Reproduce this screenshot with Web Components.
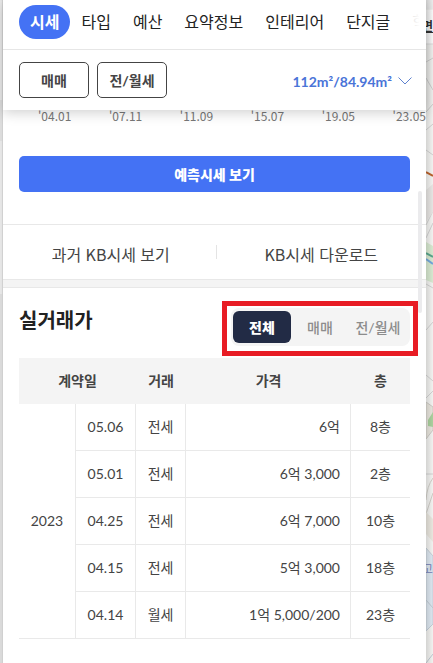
<!DOCTYPE html>
<html lang="ko">
<head>
<meta charset="utf-8">
<meta name="viewport" content="width=device-width, initial-scale=1">
<title>시세</title>
<style>
  body {
    margin: 0;
    font-family: Lato, "Noto Sans CJK KR", sans-serif;
    font-size: 14px;
    color: #444;
    background: #fff;
  }
</style>
</head>
<body>
<price-page>
  <panel-header slot="header"></panel-header>
  <price-axis labels="'04.01,'07.11,'11.09,'15.07,'19.05,'23.05"></price-axis>
  <forecast-button>예측시세 보기</forecast-button>
  <link-pair>
    <a href="#history">과거 KB시세 보기</a>
    <a href="#download">KB시세 다운로드</a>
  </link-pair>
  <deal-section heading="실거래가">
    <deal-tabs slot="tabs"></deal-tabs>
    <deal-table></deal-table>
  </deal-section>
</price-page>

<script>
function attach(host, html) {
  const template = document.createElement('template');
  template.innerHTML = html;
  host.attachShadow({ mode: 'open' });
  host.shadowRoot.appendChild(template.content.cloneNode(true));
}

class PricePage extends HTMLElement {
  constructor() {
    super();
    attach(this, `
      <style>
        :host {
          display: grid;
          grid-template-columns: 3px minmax(0, 1fr) 7px;
          min-height: 100vh;
          overflow: hidden;
        }
        .edge {
          background: linear-gradient(#e9e9e9 0, #e9e9e9 100px, #dcdcdc 100px, #dcdcdc 141px, #e6e6e6 141px, #e6e6e6 294px, #dadada 294px);
          box-shadow: inset -1px 0 1px #cfcfcf;
        }
        main {
          position: relative;
          background: #fff;
        }
        .thumb {
          position: absolute;
          top: 191px;
          right: 4px;
          width: 4px;
          height: 122px;
          border-radius: 2px;
          background: #ebebed;
        }
        .map {
          position: relative;
          overflow: hidden;
          background: #f1f1ef;
        }
        .map svg {
          display: block;
        }
        .map span {
          position: absolute;
          right: 0;
          white-space: nowrap;
        }
        .control {
          top: 17px;
          font-size: 12px;
          font-weight: bold;
          color: #333;
          text-decoration: underline;
        }
        .place {
          top: 560px;
          font-size: 11px;
          color: #7480b5;
        }
        .shade {
          position: absolute;
          inset: 0;
          background: linear-gradient(to right, rgba(0, 0, 0, .12), rgba(0, 0, 0, 0));
        }
      </style>
      <div class="edge"></div>
      <main>
        <slot name="header"></slot>
        <slot></slot>
        <div class="thumb"></div>
      </main>
      <div class="map">
        <svg width="7" height="663" viewBox="0 0 7 663" fill="none">
          <path d="M0 0h7v9H0z" fill="#ececec"/>
          <path d="M0 10h7v34H0z" fill="#fbfbfb"/>
          <path d="M0 44h7" stroke="#ddd"/>
          <path d="M0 62l7-4M0 78l7 12M0 112l7-8M0 130l7-6M0 150l7 5M0 212l7-16M0 225l7-14M0 238l7-15M0 284l7 4M0 330l7-8M0 375l7 6M0 398l7-7M0 474h7" stroke="#d0d0d0"/>
          <path d="M0 172l7 4" stroke="#b9622c" stroke-width="2"/>
          <path d="M0 190l7-6v28L0 222z" fill="#e6e4e2"/>
          <path d="M0 242l7 4v37l-7-3z" fill="#d6e7cf"/>
          <path d="M0 253l7 4" stroke="#5aa58c" stroke-width="2"/>
          <path d="M0 259l7 5" stroke="#72a7da" stroke-width="2"/>
          <path d="M0 402l7 5v23l-7 9z" fill="#e7e4dc" stroke="#cbc9c4"/>
          <path d="M2 420l5-8v15l-5-1z" fill="#a9cf9d"/>
          <path d="M7 478Q1 486 0 500M7 493L0 514l7 9" stroke="#cfcdc7"/>
          <path d="M0 512l7 7v23l-7-8z" fill="#e8e5dd"/>
          <path d="M0 548l7 8v68l-7 7z" fill="#dce6ef" stroke="#c3cdd6"/>
          <path d="M0 600l7 8M0 663l7-9" stroke="#bfc9d1"/>
        </svg>
        <span class="control">면</span>
        <span class="place">학고</span>
        <div class="shade"></div>
      </div>
    `);
  }
}

class PanelHeader extends HTMLElement {
  constructor() {
    super();
    attach(this, `
      <style>
        :host {
          display: block;
          position: relative;
          z-index: 1;
          background: #fff;
          box-shadow: 0 3px 12px rgba(0, 0, 0, .18);
        }
        nav {
          display: flex;
          align-items: center;
          box-sizing: border-box;
          height: 50px;
          padding: 0 0 6px 16px;
          overflow: hidden;
          border-bottom: 1px solid #e6e6e6;
          position: relative;
        }
        nav::after {
          content: "";
          position: absolute;
          inset: 0 0 0 auto;
          width: 32px;
          background: linear-gradient(to right, rgba(255, 255, 255, .6), #fff 80%);
        }
        nav a {
          flex: none;
          padding: 0 11px;
          border-radius: 17px;
          font-size: 16px;
          line-height: 34px;
          color: #222;
          text-decoration: none;
        }
        nav a.active {
          background: #4472f4;
          color: #fff;
          font-weight: bold;
        }
        .filters {
          display: flex;
          align-items: center;
          gap: 8px;
          padding: 12px 14px 12px 16px;
        }
        button {
          font: inherit;
          font-weight: bold;
          color: #444;
          background: #fff;
          cursor: pointer;
        }
        .type {
          width: 70px;
          height: 36px;
          padding: 0;
          border: 1px solid #444;
          border-radius: 5px;
        }
        .area {
          display: flex;
          align-items: center;
          gap: 6px;
          margin-left: auto;
          padding: 2px 0 0;
          border: 0;
          color: #4a74d8;
        }
      </style>
      <nav>
        <a href="#price" class="active">시세</a>
        <a href="#type">타입</a>
        <a href="#budget">예산</a>
        <a href="#summary">요약정보</a>
        <a href="#interior">인테리어</a>
        <a href="#posts">단지글</a>
        <a href="#school">학</a>
      </nav>
      <div class="filters">
        <button class="type">매매</button>
        <button class="type">전/월세</button>
        <button class="area">112m²/84.94m²
          <svg width="14" height="8" viewBox="0 0 14 8" fill="none" stroke="#5f82cf"><path d="M.5.5L7 7 13.500.5"/></svg>
        </button>
      </div>
    `);
  }
}

class PriceAxis extends HTMLElement {
  constructor() {
    super();
    attach(this, `
      <style>
        :host {
          display: flex;
          justify-content: space-between;
          height: 46px;
          padding-left: 35px;
          font-family: "Noto Sans CJK KR", sans-serif;
          font-size: 12px;
          line-height: 12px;
          color: #777;
        }
      </style>
    `);
  }

  connectedCallback() {
    this.getAttribute('labels').split(',').forEach((label) => {
      const span = document.createElement('span');
      span.textContent = label;
      this.shadowRoot.appendChild(span);
    });
  }
}

class ForecastButton extends HTMLElement {
  constructor() {
    super();
    attach(this, `
      <style>
        :host {
          display: block;
          padding: 0 16px 32px;
        }
        button {
          width: 100%;
          height: 36px;
          border: 0;
          border-radius: 5px;
          background: #4472f4;
          color: #fff;
          font: inherit;
          font-weight: 900;
          cursor: pointer;
        }
      </style>
      <button><slot></slot></button>
    `);
  }
}

class LinkPair extends HTMLElement {
  constructor() {
    super();
    attach(this, `
      <style>
        :host {
          display: grid;
          grid-template-columns: 1fr 1px 1fr;
          grid-auto-flow: dense;
          align-items: center;
          height: 54px;
          padding-left: 3px;
          border-top: 1px solid #e8e8e8;
          font-family: "Noto Sans CJK KR", sans-serif;
        }
        ::slotted(a) {
          padding-top: 4px;
          font-size: 16px;
          line-height: 24px;
          text-align: center;
          color: #444;
          text-decoration: none;
        }
        ::slotted(a:last-child) {
          grid-column: 3;
        }
        i {
          grid-column: 2;
          height: 14px;
          background: #e4e4e4;
        }
      </style>
      <slot></slot>
      <i></i>
    `);
  }
}

class DealSection extends HTMLElement {
  constructor() {
    super();
    attach(this, `
      <style>
        :host {
          display: block;
        }
        .band {
          height: 7px;
          background: #f4f4f4;
          border: solid #e8e8e8;
          border-width: 1px 0;
        }
        header {
          display: flex;
          justify-content: space-between;
          align-items: center;
          height: 70px;
          padding: 0 10px 0 16px;
        }
        h2 {
          margin: 0;
          padding-bottom: 6px;
          font-size: 20px;
          line-height: 28px;
          color: #222;
        }
      </style>
      <div class="band"></div>
      <header>
        <h2></h2>
        <slot name="tabs"></slot>
      </header>
      <slot></slot>
    `);
  }

  connectedCallback() {
    this.shadowRoot.querySelector('h2').textContent = this.getAttribute('heading');
  }
}

class DealTabs extends HTMLElement {
  constructor() {
    super();
    attach(this, `
      <style>
        :host {
          display: block;
          position: relative;
          margin: 8px 6px 0 0;
        }
        .track {
          display: flex;
          padding: 3px 3px 3px 2px;
          border-radius: 8px;
          background: #f4f4f4;
        }
        button {
          width: 58px;
          height: 32px;
          padding: 0;
          border: 0;
          border-radius: 6px;
          background: none;
          font: inherit;
          font-weight: 500;
          color: #8c8c8c;
          cursor: pointer;
        }
        button.active {
          background: #222b45;
          color: #fff;
          font-weight: 900;
        }
        .frame {
          position: absolute;
          inset: -7px -8px -10px -9px;
          border: 5px solid #e81c24;
          pointer-events: none;
        }
      </style>
      <div class="track">
        <button class="active">전체</button>
        <button>매매</button>
        <button>전/월세</button>
      </div>
      <div class="frame"></div>
    `);
  }

  connectedCallback() {
    const buttons = this.shadowRoot.querySelectorAll('button');
    buttons.forEach((button) => {
      button.addEventListener('click', () => {
        buttons.forEach((b) => b.classList.toggle('active', b === button));
      });
    });
  }
}

const deals = [
  ['05.06', '전세', '6억', '8층'],
  ['05.01', '전세', '6억 3,000', '2층'],
  ['04.25', '전세', '6억 7,000', '10층'],
  ['04.15', '전세', '5억 3,000', '18층'],
  ['04.14', '월세', '1억 5,000/200', '23층'],
];

class DealTable extends HTMLElement {
  constructor() {
    super();
    attach(this, `
      <style>
        :host {
          display: block;
          padding: 0 16px 24px;
        }
        table {
          width: 100%;
          table-layout: fixed;
          border-collapse: separate;
          border-spacing: 0;
        }
        .year { width: 57px; }
        .date { width: 60px; }
        .kind { width: 50px; }
        .floor { width: 59px; }
        th, td {
          box-sizing: border-box;
          height: 47px;
          padding: 0;
          line-height: 20px;
          text-align: center;
        }
        th {
          height: 46px;
          background: #f4f4f4;
        }
        td {
          border: solid #e9e9e9;
          border-width: 0 1px 1px 0;
        }
        td:last-child {
          border-right: 0;
        }
        .price {
          padding-right: 10px;
          text-align: right;
        }
      </style>
      <table>
        <colgroup>
          <col class="year"><col class="date"><col class="kind"><col><col class="floor">
        </colgroup>
        <thead>
          <tr><th colspan="2">계약일</th><th>거래</th><th>가격</th><th>층</th></tr>
        </thead>
        <tbody></tbody>
      </table>
    `);
  }

  connectedCallback() {
    this.shadowRoot.querySelector('tbody').innerHTML = deals.map(([date, kind, price, floor], index) => `
      <tr>
        ${index === 0 ? `<td rowspan="${deals.length}">2023</td>` : ''}
        <td>${date}</td><td>${kind}</td><td class="price">${price}</td><td>${floor}</td>
      </tr>`).join('');
  }
}

customElements.define('price-page', PricePage);
customElements.define('panel-header', PanelHeader);
customElements.define('price-axis', PriceAxis);
customElements.define('forecast-button', ForecastButton);
customElements.define('link-pair', LinkPair);
customElements.define('deal-section', DealSection);
customElements.define('deal-tabs', DealTabs);
customElements.define('deal-table', DealTable);
</script>
</body>
</html>
